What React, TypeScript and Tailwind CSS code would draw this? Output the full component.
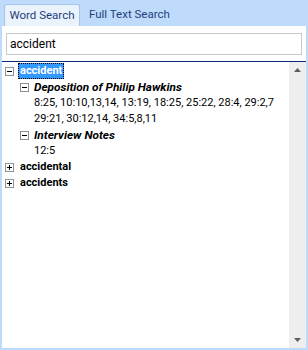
import React from 'react';

// Tree expander box (+ / −)
const Expander: React.FC<{ open: boolean }> = ({ open }) => (
  <svg width="9" height="9" viewBox="0 0 9 9" className="shrink-0">
    <rect x="0.5" y="0.5" width="8" height="8" fill="#fff" stroke="#919191" />
    <line x1="2" y1="4.5" x2="7" y2="4.5" stroke="#000" />
    {!open && <line x1="4.5" y1="2" x2="4.5" y2="7" stroke="#000" />}
  </svg>
);

const Arrow: React.FC<{ up: boolean }> = ({ up }) => (
  <svg width="7" height="4" viewBox="0 0 7 4">
    {up ? <polygon points="3.5,0 7,4 0,4" fill="#606060" /> : <polygon points="0,0 7,0 3.5,4" fill="#606060" />}
  </svg>
);

export default function App() {
  return (
    <div
      className="w-[308px] h-[350px] bg-[#bfdbfb] flex flex-col text-[11px] text-black"
      style={{ fontFamily: 'Roboto, "Noto Sans", sans-serif' }}
    >
      {/* Tabs */}
      <div className="h-[26px] flex items-end pl-[4px] shrink-0 text-[11.5px]">
        <div className="h-[22px] w-[76px] bg-[#eaf2fc] border border-b-0 border-[#a5c4ea] rounded-t-[3px] flex items-center justify-center text-[#1e3f7a]">
          Word Search
        </div>
        <div className="h-[22px] px-[9px] flex items-center text-[#1e3f7a]">Full Text Search</div>
      </div>

      {/* Panel */}
      <div className="flex-1 ml-[2px] mr-[2px] mb-[2px] bg-white flex flex-col min-h-0">
        <div className="px-[4px] pt-[7px] pb-[6px]">
          <div className="h-[22px] border border-[#c9c9c9] flex items-center pl-[3px] text-[12px]">accident</div>
        </div>
        <div className="h-[1px] bg-[#0b2a78]" />
        <div className="flex-1 flex min-h-0">
          {/* Tree */}
          <div className="flex-1 pt-[1px] leading-[16px]">
            <div className="flex items-center h-[16px] pl-[3px] gap-[4px]">
              <Expander open />
              <span className="font-bold bg-[#3399ff] text-white px-[2px] outline outline-1 outline-dotted outline-[#000] -outline-offset-1">accident</span>
            </div>
            <div className="flex items-center h-[16px] pl-[18px] gap-[5px]">
              <Expander open />
              <span className="font-bold italic text-[11.8px]">Deposition of Philip Hawkins</span>
            </div>
            <div className="pl-[32px]">8:25, 10:10,13,14, 13:19, 18:25, 25:22, 28:4, 29:2,7</div>
            <div className="pl-[32px]">29:21, 30:12,14, 34:5,8,11</div>
            <div className="flex items-center h-[16px] pl-[18px] gap-[5px]">
              <Expander open />
              <span className="font-bold italic text-[11.8px]">Interview Notes</span>
            </div>
            <div className="pl-[32px]">12:5</div>
            <div className="flex items-center h-[16px] pl-[3px] gap-[6px]">
              <Expander open={false} />
              <span className="font-bold">accidental</span>
            </div>
            <div className="flex items-center h-[16px] pl-[3px] gap-[6px]">
              <Expander open={false} />
              <span className="font-bold">accidents</span>
            </div>
          </div>
          {/* Scrollbar */}
          <div className="w-[17px] bg-[#eeeeee] flex flex-col justify-between items-center py-[6px]">
            <Arrow up />
            <Arrow up={false} />
          </div>
        </div>
      </div>
    </div>
  );
}
